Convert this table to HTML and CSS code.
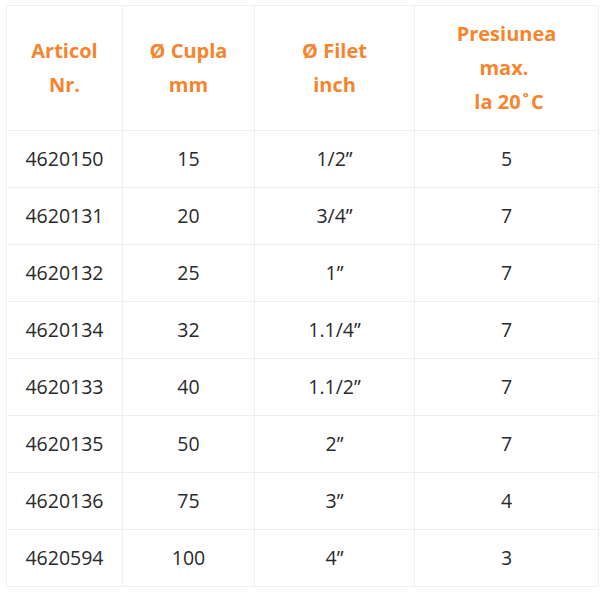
FILE: index.html
```html
<!DOCTYPE html>
<html>
<head>
<meta charset="utf-8">
<link rel="stylesheet" href="styles.css">
</head>
<body>
<table class="spec">
  <colgroup>
    <col class="c1"><col class="c2"><col class="c3"><col class="c4">
  </colgroup>
  <thead>
    <tr>
      <th>Articol<br>Nr.</th>
      <th>Ø Cupla<br>mm</th>
      <th>Ø Filet<br>inch</th>
      <th>Presiunea<br>max.&nbsp;<br>&nbsp;la 20&#8202;˚&#8202;C</th>
    </tr>
  </thead>
  <tbody>
    <tr><td>4620150</td><td>15</td><td>1/2”</td><td>5</td></tr>
    <tr><td>4620131</td><td>20</td><td>3/4”</td><td>7</td></tr>
    <tr><td>4620132</td><td>25</td><td>1”</td><td>7</td></tr>
    <tr><td>4620134</td><td>32</td><td>1.1/4”</td><td>7</td></tr>
    <tr><td>4620133</td><td>40</td><td>1.1/2”</td><td>7</td></tr>
    <tr><td>4620135</td><td>50</td><td>2”</td><td>7</td></tr>
    <tr><td>4620136</td><td>75</td><td>3”</td><td>4</td></tr>
    <tr><td>4620594</td><td>100</td><td>4”</td><td>3</td></tr>
  </tbody>
</table>
</body>
</html>
```
FILE: styles.css
```css
html, body {
  margin: 0;
  padding: 0;
  background: #fff;
}
body {
  padding: 5px 0 0 6px;
  font-family: "Open Sans", "DejaVu Sans", sans-serif;
}
.spec {
  border-collapse: collapse;
  width: 592px;
  table-layout: fixed;
}
.c1 { width: 116px; }
.c2 { width: 132px; }
.c3 { width: 160px; }
.c4 { width: 184px; }
.spec th, .spec td {
  border: 1px solid #efefef;
  text-align: center;
  vertical-align: middle;
  padding: 0;
}
.spec th {
  height: 124px;
  color: #f7842c;
  font-weight: 700;
  font-size: 20px;
  line-height: 34px;
}
.spec td {
  height: 56px;
  color: #2a2a2a;
  font-size: 19.5px;
  line-height: 34px;
}
```
